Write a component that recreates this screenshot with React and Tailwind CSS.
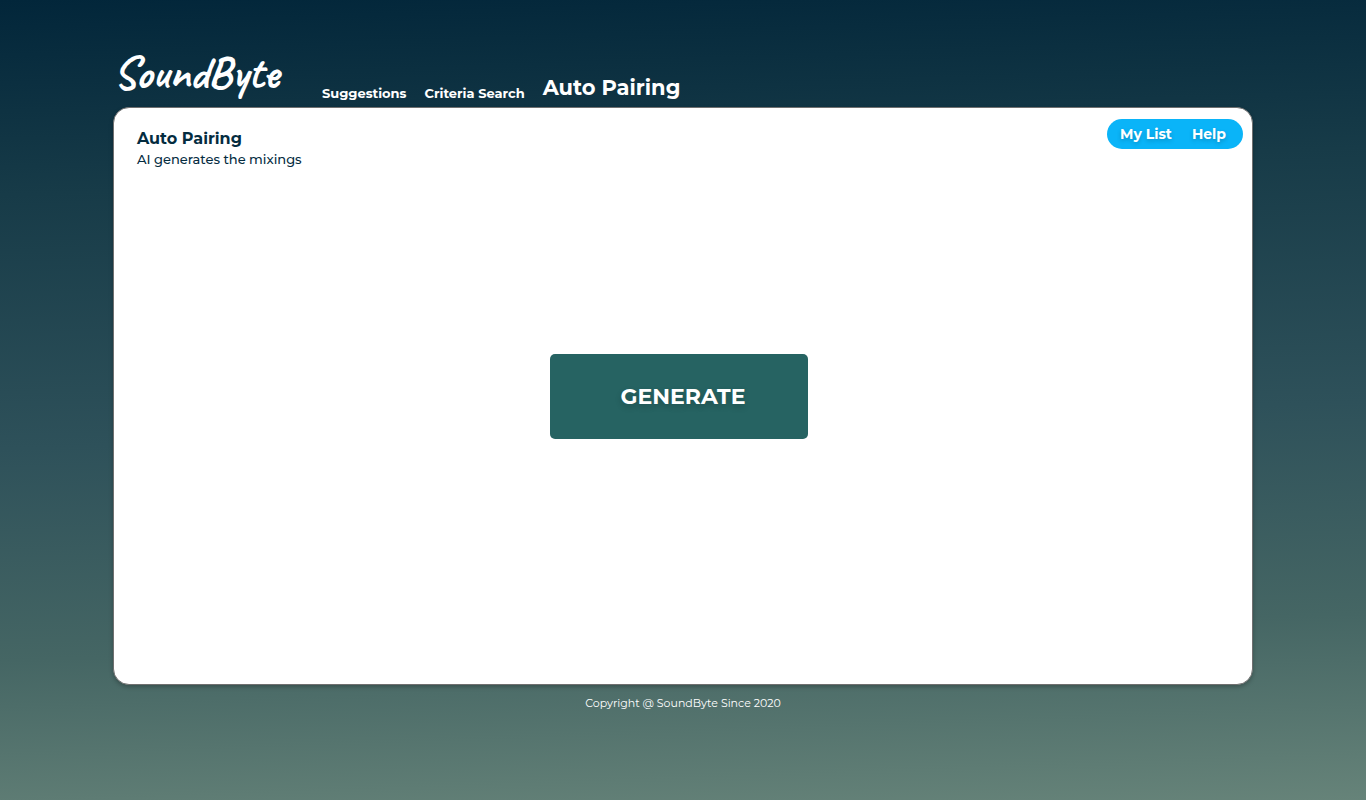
const navLinks = [
  { label: 'Suggestions', active: false },
  { label: 'Criteria Search', active: false },
  { label: 'Auto Pairing', active: true },
];

function Header() {
  return (
    <header className="flex h-[107px] items-end">
      <a
        href="#home"
        className="mb-1 w-[209px] whitespace-nowrap font-['Satisfy','Caveat','Dancing_Script','Liberation_Serif',cursive] text-[46px] leading-[60px] font-bold"
      >
        SoundByte
      </a>
      <nav aria-label="Main" className="flex items-end gap-[18px] pb-1">
        {navLinks.map(({ label, active }) => (
          <a
            key={label}
            href="#nav"
            aria-current={active ? 'page' : undefined}
            className={
              active
                ? 'text-[21px] leading-[30px] font-bold'
                : 'text-[13px] leading-5 font-bold'
            }
          >
            {label}
          </a>
        ))}
      </nav>
    </header>
  );
}

function Panel() {
  return (
    <main className="flex min-h-[578px] flex-col rounded-2xl border border-[#707070] bg-white pb-[10px] text-[#042c3f] shadow-[0_2px_4px_rgba(0,0,0,0.25)]">
      <div className="flex items-start justify-between pt-[11px] pr-[9px] pl-[23px]">
        <div className="pt-2">
          <h1 className="text-base leading-6 font-bold">Auto Pairing</h1>
          <p className="text-[13px] leading-4 font-medium">AI generates the mixings</p>
        </div>
        <div className="flex h-[30px] items-center gap-5 rounded-full bg-[#0ab4f8] pr-[17px] pl-[13px] text-sm font-bold text-white [text-shadow:0_2px_4px_rgba(0,0,0,0.2)]">
          <a href="#list">My List</a>
          <a href="#help">Help</a>
        </div>
      </div>
      <div className="flex flex-1 items-start justify-center pt-[187px] pr-2">
        <button
          type="button"
          className="h-[85px] w-[258px] rounded-[5px] bg-[#266362] pl-2 text-[22px] font-bold text-white [text-shadow:0_3px_6px_rgba(0,0,0,0.2)]"
        >
          GENERATE
        </button>
      </div>
    </main>
  );
}

export default function App() {
  return (
    <div className="min-h-screen bg-[linear-gradient(178deg,#02263a_0%,#173b48_23%,#2e515a_53%,#456664_78%,#668379_100%)] font-['Montserrat','Inter',sans-serif] text-white">
      <div className="mx-auto max-w-[1140px]">
        <Header />
        <Panel />
        <footer className="pt-[10px] text-center text-[11px] leading-4">
          Copyright @ SoundByte Since 2020
        </footer>
      </div>
    </div>
  );
}
